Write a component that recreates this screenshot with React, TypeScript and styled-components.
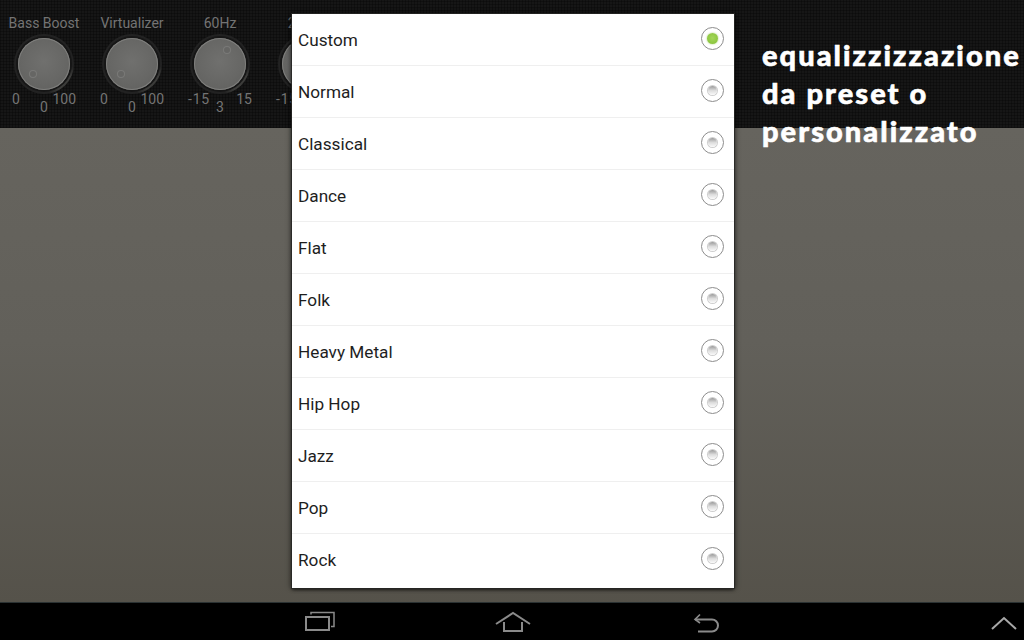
import React from "react";
import styled, { createGlobalStyle } from "styled-components";

const Global = createGlobalStyle`
  html, body { margin: 0; padding: 0; width: 1024px; height: 640px; overflow: hidden; background: #000; }
  body { font-family: "Roboto", "Liberation Sans", sans-serif; }
`;

const Screen = styled.div`
  position: relative;
  width: 1024px;
  height: 640px;
  display: flex;
  flex-direction: column;
  overflow: hidden;
`;

const TopPanel = styled.div`
  height: 128px;
  flex: none;
  display: flex;
  background-color: #161616;
  background-image:
    repeating-linear-gradient(0deg, rgba(0,0,0,.28) 0 1px, transparent 1px 3px),
    repeating-linear-gradient(90deg, rgba(0,0,0,.28) 0 1px, transparent 1px 3px);
`;

const KnobGroup = styled.div`
  width: 88px;
  flex: none;
  display: flex;
  flex-direction: column;
  align-items: center;
  padding-top: 15px;
  box-sizing: border-box;
  color: #747474;
  font-size: 14px;
`;

const KnobLabel = styled.div`
  height: 16px;
  line-height: 16px;
  white-space: nowrap;
`;

const KnobRing = styled.div`
  position: relative;
  width: 60px;
  height: 60px;
  margin-top: 3px;
  border-radius: 50%;
  background: conic-gradient(#222 0deg 95deg, #3c3c3a 115deg 150deg, #222 170deg 360deg);
  display: flex;
  align-items: center;
  justify-content: center;
`;

const KnobFace = styled.div`
  position: relative;
  width: 52px;
  height: 52px;
  border-radius: 50%;
  background: radial-gradient(circle at 50% 45%, #70706e 0%, #676765 55%, #5e5e5c 100%);
  box-shadow: inset 0 0 0 1px #7f7f7d, 0 0 0 2px #161616;
`;

const KnobDot = styled.div<{ $x: number; $y: number }>`
  position: absolute;
  left: ${p => p.$x}px;
  top: ${p => p.$y}px;
  width: 6px;
  height: 6px;
  border-radius: 50%;
  background: #666664;
  box-shadow: 0 0 0 1px #7a7a78;
`;

const RangeRow = styled.div`
  position: relative;
  width: 100%;
  height: 30px;
  margin-top: -3px;
  display: flex;
  justify-content: space-between;
  padding: 0 12px;
  box-sizing: border-box;
  font-size: 14px;
  line-height: 16px;
`;

const RangeMin = styled.span`
  letter-spacing: .8px;
`;

const RangeValue = styled.span`
  position: absolute;
  left: 0;
  right: 0;
  top: 8px;
  text-align: center;
`;

const Backdrop = styled.div`
  flex: 1;
  background: linear-gradient(180deg, #66645e 0%, #62605a 45%, #55524a 100%);
`;

const NavBar = styled.div`
  height: 38px;
  flex: none;
  background: #000;
  border-top: 1px solid #2b3233;
  box-sizing: border-box;
  display: grid;
  grid-template-columns: 304px 32px 159px 36px 161px 28px 1fr 28px;
  padding-right: 6px;
  align-items: center;
  color: #8a8a8a;
`;

const NavIcon = styled.svg`
  display: block;
`;

const RecentsIcon = styled(NavIcon)`
  margin-top: -2px;
`;

const ChevronIcon = styled(NavIcon)`
  margin-top: 2px;
  color: #a8a8a8;
`;

const Dialog = styled.div`
  position: absolute;
  left: 292px;
  top: 14px;
  width: 442px;
  height: 574px;
  background: #fff;
  display: flex;
  flex-direction: column;
  box-sizing: border-box;
  box-shadow: 0 0 0 1px rgba(40,40,38,.8), 0 2px 3px rgba(0,0,0,.55), 2px 0 5px rgba(0,0,0,.35), -2px 0 5px rgba(0,0,0,.35);
`;

const Row = styled.div`
  height: 52px;
  flex: none;
  box-sizing: border-box;
  display: flex;
  align-items: center;
  justify-content: space-between;
  padding: 0 10px 0 6px;
  border-bottom: 1px solid #efefef;
  color: #1e1e1e;
  font-size: 17.2px;
  &:last-child { border-bottom-color: transparent; }
`;

const Radio = styled.div`
  width: 23px;
  height: 23px;
  border-radius: 50%;
  box-sizing: border-box;
  border: 1px solid #8d8d8d;
  background: #fff;
  display: flex;
  align-items: center;
  justify-content: center;
  margin-top: -3px;
`;

const RadioDot = styled.div<{ $on?: boolean }>`
  width: ${p => (p.$on ? 11 : 9)}px;
  height: ${p => (p.$on ? 11 : 9)}px;
  border-radius: 50%;
  background: ${p => p.$on
    ? "radial-gradient(circle at 50% 45%, #a4d65a 0%, #8cc63f 70%, #7fb539 100%)"
    : "linear-gradient(180deg, #9a9a9a 0%, #dcdcdc 50%, #fafafa 100%)"};
  box-shadow: ${p => p.$on ? "0 0 2px #a5cc70" : "0 0 0 1px #cfcfcf"};
`;

const Caption = styled.div`
  position: absolute;
  left: 762px;
  top: 35.5px;
  width: 262px;
  color: #fff;
  font-family: "Lato", "Liberation Sans", sans-serif;
  font-weight: 900;
  font-size: 29px;
  line-height: 38.2px;
  letter-spacing: 2.05px;
  -webkit-text-stroke: .6px #fff;
  white-space: nowrap;
`;

const knobs = [
  { label: "Bass Boost", min: "0", max: "100", value: "0", x: 12, y: 33 },
  { label: "Virtualizer", min: "0", max: "100", value: "0", x: 12, y: 33 },
  { label: "60Hz", min: "-15", max: "15", value: "3", x: 30, y: 9 },
  { label: "230Hz", min: "-15", max: "15", value: "0", x: 22, y: 9 },
];

const presets = ["Custom", "Normal", "Classical", "Dance", "Flat", "Folk", "Heavy Metal", "Hip Hop", "Jazz", "Pop", "Rock"];

export default function App() {
  return (
    <Screen>
      <Global />
      <TopPanel>
        {knobs.map(k => (
          <KnobGroup key={k.label}>
            <KnobLabel>{k.label}</KnobLabel>
            <KnobRing>
              <KnobFace>
                <KnobDot $x={k.x} $y={k.y} />
              </KnobFace>
            </KnobRing>
            <RangeRow>
              <RangeMin>{k.min}</RangeMin>
              <span>{k.max}</span>
              <RangeValue>{k.value}</RangeValue>
            </RangeRow>
          </KnobGroup>
        ))}
      </TopPanel>
      <Backdrop />
      <NavBar>
        <span />
        <RecentsIcon width="32" height="22" viewBox="0 0 32 22" fill="none" stroke="currentColor" strokeWidth="2">
          <rect x="2" y="7" width="23" height="13" />
          <path d="M7 4.5V2.5h23v14h-3" strokeWidth="1.5" />
        </RecentsIcon>
        <span />
        <NavIcon width="36" height="22" viewBox="0 0 36 22" fill="none" stroke="currentColor" strokeWidth="2">
          <path d="M1 13 18 2l17 11" />
          <path d="M9 11v9h18V11" />
        </NavIcon>
        <span />
        <NavIcon width="28" height="22" viewBox="0 0 28 22" fill="none" stroke="currentColor" strokeWidth="2">
          <path d="M6 20.5h14a6 6 0 0 0 0-12H3" />
          <path d="M8 3.5 3 8.5l5 3.5" strokeWidth="1.6" />
        </NavIcon>
        <span />
        <ChevronIcon width="28" height="16" viewBox="0 0 28 16" fill="none" stroke="currentColor" strokeWidth="2">
          <path d="M2 14 14 3l12 11" />
        </ChevronIcon>
      </NavBar>
      <Dialog>
        {presets.map((p, i) => (
          <Row key={p}>
            <span>{p}</span>
            <Radio><RadioDot $on={i === 0} /></Radio>
          </Row>
        ))}
      </Dialog>
      <Caption>
        equalizzizzazione<br />da preset o<br />personalizzato
      </Caption>
    </Screen>
  );
}
